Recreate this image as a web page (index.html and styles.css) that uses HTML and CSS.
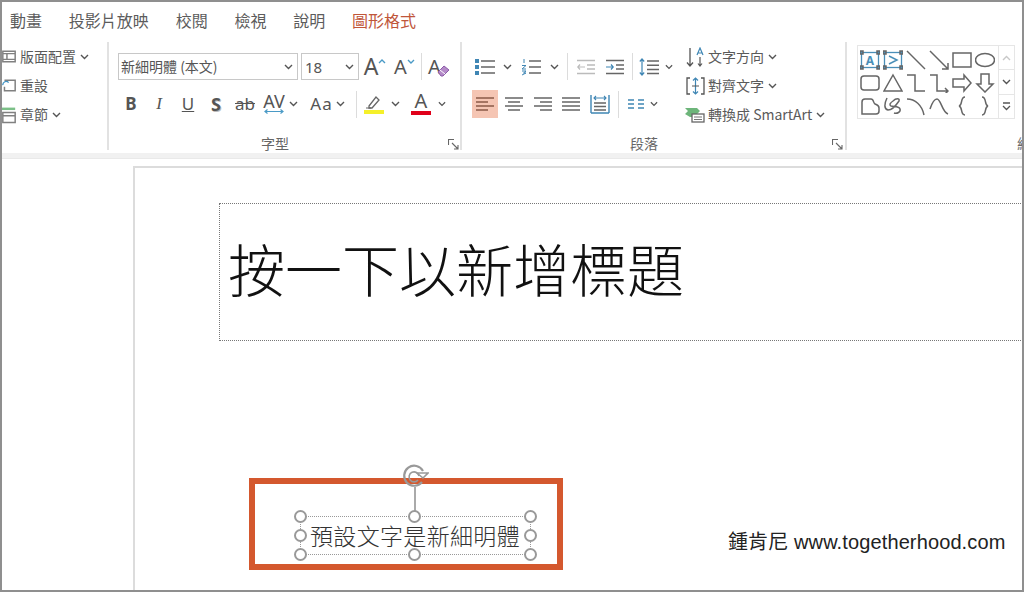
FILE: index.html
```html
<!DOCTYPE html>
<html lang="zh-Hant">
<head>
<meta charset="utf-8">
<title>PowerPoint</title>
<link rel="stylesheet" href="styles.css">
</head>
<body>
<svg class="defs" width="0" height="0">
  <symbol id="chev" viewBox="0 0 9 6"><path d="M1 1l3.500 3.500L8 1" fill="none" stroke="#555" stroke-width="1.400"/></symbol>
  <symbol id="launch" viewBox="0 0 11 11"><path d="M.5 6V.5H6M4 4l6 6M10 6v4H6" fill="none" stroke="#666" stroke-width="1.100"/></symbol>
</svg>
<div class="frame">
  <nav class="tabs">
    <span>動畫</span><span>投影片放映</span><span>校閱</span><span>檢視</span><span>說明</span><span class="tab-active">圖形格式</span>
  </nav>

  <div class="ribbon">
    <section class="group group-slides">
      <div class="cmd"><span class="cmd-icon"><svg width="17" height="15" viewBox="0 0 17 15"><path d="M1 1h15v13H1zM1 4h15M1 11h15M6 4v7" fill="none" stroke="#808080" stroke-width="1.800"/></svg></span>版面配置<svg class="chev" width="9" height="6"><use href="#chev"/></svg></div>
      <div class="cmd"><span class="cmd-icon"><svg width="17" height="15" viewBox="0 0 17 15"><path d="M3 1h13v13H3V9" fill="none" stroke="#808080" stroke-width="1.800"/><path d="M1 7a4 4 0 0 1 7-3" fill="none" stroke="#3f93c4" stroke-width="1.600"/></svg></span>重設</div>
      <div class="cmd"><span class="cmd-icon"><svg width="17" height="20" viewBox="0 0 17 20"><path d="M0 2.500h16" stroke="#7cc088" stroke-width="3"/><path d="M1 7h15v12H1zM1 11h15" fill="none" stroke="#808080" stroke-width="1.800"/></svg></span>章節<svg class="chev" width="9" height="6"><use href="#chev"/></svg></div>
    </section>

    <section class="group group-font">
      <div class="font-row-1">
        <div class="combo combo-font"><span class="combo-text">新細明體 (本文)</span><svg width="9" height="6"><use href="#chev"/></svg></div>
        <div class="combo combo-size">18<svg width="9" height="6"><use href="#chev"/></svg></div>
        <span class="cell big-a">A<svg width="8" height="5" viewBox="0 0 8 5"><path d="M1 4l3-3 3 3" fill="none" stroke="#4a9ac6" stroke-width="1.400"/></svg></span>
        <span class="cell mid-a">A<svg width="8" height="5" viewBox="0 0 8 5"><path d="M1 1l3 3 3-3" fill="none" stroke="#4a9ac6" stroke-width="1.400"/></svg></span>
        <span class="cell"><i class="sep"></i></span>
        <span class="cell mid-a clear-a">A<svg width="13" height="13" viewBox="0 0 13 13"><path d="M1 8l6-6 5 4-6 6H4z" fill="#b48ac8" stroke="#8b5aa8"/><path d="M3 6l5 4" stroke="#fff"/></svg></span>
      </div>
      <div class="font-row-2">
        <span class="cell fmt bold">B</span>
        <span class="cell fmt ital">I</span>
        <span class="cell fmt under">U</span>
        <span class="cell fmt shadow">S</span>
        <span class="cell fmt strike">ab</span>
        <span class="cell fmt spacing">AV<svg width="20" height="5" viewBox="0 0 20 5"><path d="M1 2.500h18M3.500 .5l-2.500 2 2.500 2M16.500 .5l2.500 2-2.500 2" fill="none" stroke="#4a9ac6" stroke-width="1.200"/></svg></span>
        <span class="cell"><svg width="9" height="6"><use href="#chev"/></svg></span>
        <i></i>
        <span class="cell fmt case">Aa</span>
        <span class="cell"><svg width="9" height="6"><use href="#chev"/></svg></span>
        <i></i>
        <span class="cell"><i class="sep"></i></span>
        <span class="cell color"><svg width="20" height="20" viewBox="0 0 20 20"><path d="M5 12l7-9 3 3-7 8H5z" fill="none" stroke="#666" stroke-width="1.300"/><path d="M2 14h5" stroke="#666"/><path d="M0 18h20" stroke="#f5f02a" stroke-width="4"/></svg></span>
        <span class="cell"><svg width="9" height="6"><use href="#chev"/></svg></span>
        <span class="cell color font-color">A</span>
        <span class="cell"><svg width="9" height="6"><use href="#chev"/></svg></span>
      </div>
      <div class="group-label">字型</div>
      <svg class="launcher" width="11" height="11"><use href="#launch"/></svg>
    </section>

    <section class="group group-para">
      <div class="para-left">
        <div class="para-row-1">
          <span class="cell"><svg width="20" height="18" viewBox="0 0 20 18"><path d="M6 3h14M6 9h14M6 15h14" stroke="#666" stroke-width="1.400"/><path d="M0 1h4v4H0zM0 7h4v4H0zM0 13h4v4H0z" fill="#3f86b4"/></svg></span>
          <span class="cell"><svg width="9" height="6"><use href="#chev"/></svg></span>
          <span class="cell"><svg width="19" height="18" viewBox="0 0 19 18"><path d="M7 3h12M7 9h12M7 15h12" stroke="#666" stroke-width="1.400"/><path d="M2 1v4M0 7.500h4L0 11h4M0 13h4L1.500 15H4L0 17" fill="none" stroke="#3f86b4"/></svg></span>
          <span class="cell"><svg width="9" height="6"><use href="#chev"/></svg></span>
          <span class="cell"><i class="sep"></i></span>
          <span class="cell"><svg width="18" height="16" viewBox="0 0 18 16"><path d="M0 1.500h18M10 6h8M10 10h8M0 14.500h18" stroke="#bbb" stroke-width="1.400"/><path d="M8 8H1M3 5.500L.8 8 3 10.500" fill="none" stroke="#bbb" stroke-width="1.200"/></svg></span>
          <span class="cell"><svg width="18" height="16" viewBox="0 0 18 16"><path d="M0 1.500h18M10 6h8M10 10h8M0 14.500h18" stroke="#666" stroke-width="1.400"/><path d="M0 8h7M5 5.500L7.200 8 5 10.500" fill="none" stroke="#3f86b4" stroke-width="1.200"/></svg></span>
          <span class="cell"><i class="sep"></i></span>
          <span class="cell"><svg width="20" height="18" viewBox="0 0 20 18"><path d="M8 3h12M8 7.300h12M8 11.500h12M8 15.500h12" stroke="#666" stroke-width="1.400"/><path d="M3 1v16M.8 3.500L3 1l2.200 2.500M.8 14.500L3 17l2.200-2.500" fill="none" stroke="#3f86b4" stroke-width="1.200"/></svg></span>
          <span class="cell"><svg width="9" height="6"><use href="#chev"/></svg></span>
        </div>
        <div class="para-row-2">
          <span class="cell align-on"><svg width="18" height="14" viewBox="0 0 18 14"><path d="M0 1h18M0 5h12M0 9h18M0 13h12" stroke="#8a5a48" stroke-width="1.400"/></svg></span>
          <span class="cell"><svg width="18" height="14" viewBox="0 0 18 14"><path d="M0 1h18M3 5h12M0 9h18M3 13h12" stroke="#666" stroke-width="1.400"/></svg></span>
          <span class="cell"><svg width="18" height="14" viewBox="0 0 18 14"><path d="M0 1h18M6 5h12M0 9h18M6 13h12" stroke="#666" stroke-width="1.400"/></svg></span>
          <span class="cell"><svg width="18" height="14" viewBox="0 0 18 14"><path d="M0 1h18M0 5h18M0 9h18M0 13h18" stroke="#666" stroke-width="1.400"/></svg></span>
          <span class="cell"><svg width="20" height="20" viewBox="0 0 20 20"><path d="M1 1v18M19 1v18M1 19h18" fill="none" stroke="#3f86b4" stroke-width="1.400"/><path d="M4 9h12M4 12.500h12M4 16h12" stroke="#666" stroke-width="1.400"/><path d="M4 4h12M6 2L4 4l2 2M14 2l2 2-2 2" fill="none" stroke="#3f86b4" stroke-width="1.100"/></svg></span>
          <span class="cell"><i class="sep"></i></span>
          <span class="cell"><svg width="16" height="10" viewBox="0 0 16 10"><path d="M0 1h6M0 5h6M0 9h6M10 1h6M10 5h6M10 9h6" stroke="#3f86b4" stroke-width="1.400"/></svg></span>
          <span class="cell"><svg width="9" height="6"><use href="#chev"/></svg></span>
        </div>
      </div>
      <div class="para-right">
        <div class="cmd"><span class="text-icon"><svg width="19" height="20" viewBox="0 0 19 20"><path d="M4 1v18M1 15.500L4 19l3-3.500" fill="none" stroke="#555" stroke-width="1.300"/><path d="M11 8l3-7 3 7M12 6h4" fill="none" stroke="#3f86b4" stroke-width="1.200"/><path d="M14 10v9M12 16.500l2 2.500 2-2.500" fill="none" stroke="#555" stroke-width="1.200"/></svg></span>文字方向<svg class="chev" width="9" height="6"><use href="#chev"/></svg></div>
        <div class="cmd"><span class="text-icon"><svg width="19" height="18" viewBox="0 0 19 18"><path d="M4 1H1v16h3M15 1h3v16h-3" fill="none" stroke="#555" stroke-width="1.300"/><path d="M9.500 1v16M7 3.500L9.500 1 12 3.500M7 14.500L9.500 17l2.500-2.500" fill="none" stroke="#3f86b4" stroke-width="1.200"/><path d="M6 9h7" stroke="#555"/></svg></span>對齊文字<svg class="chev" width="9" height="6"><use href="#chev"/></svg></div>
        <div class="cmd"><span class="text-icon"><svg width="20" height="16" viewBox="0 0 20 16"><path d="M0 1h12l3 3-3 3H7v3H5L0 7l3-3z" fill="#6db57a"/><rect x="7" y="7" width="12" height="8" fill="#fff" stroke="#666" stroke-width="1.300"/><path d="M9 10h8M9 12.500h8" stroke="#777"/></svg></span>轉換成 SmartArt<svg class="chev" width="9" height="6"><use href="#chev"/></svg></div>
      </div>
      <div class="group-label">段落</div>
      <svg class="launcher" width="11" height="11"><use href="#launch"/></svg>
    </section>

    <section class="group group-shapes">
      <div class="gallery">
        <div class="shapes">
          <svg width="20" height="20" viewBox="0 0 20 20"><rect x="1.500" y="2.500" width="17" height="15" fill="none" stroke="#4a8fb8" stroke-width="1.300"/><path d="M0 1h3v3H0zM17 1h3v3h-3zM0 16h3v3H0zM17 16h3v3h-3z" fill="#4a8fb8"/><text x="10" y="15" class="shape-a">A</text></svg>
          <svg width="20" height="20" viewBox="0 0 20 20"><rect x="1.500" y="2.500" width="17" height="15" fill="none" stroke="#4a8fb8" stroke-width="1.300"/><path d="M0 1h3v3H0zM17 1h3v3h-3zM0 16h3v3H0zM17 16h3v3h-3z" fill="#4a8fb8"/><path d="M6 6l8 4-8 4" fill="none" stroke="#4a8fb8" stroke-width="1.500"/></svg>
          <svg width="20" height="20" viewBox="0 0 20 20"><path d="M1 1l18 18"/></svg>
          <svg width="20" height="20" viewBox="0 0 20 20"><path d="M1 1l18 18M13 19h6v-6"/></svg>
          <svg width="20" height="20" viewBox="0 0 20 20"><rect x="1" y="3" width="18" height="14"/></svg>
          <svg width="20" height="20" viewBox="0 0 20 20"><ellipse cx="10" cy="10" rx="9.500" ry="6.500"/></svg>
          <svg width="20" height="20" viewBox="0 0 20 20"><rect x="1" y="3" width="18" height="14" rx="3"/></svg>
          <svg width="20" height="20" viewBox="0 0 20 20"><path d="M10 2l9 16H1z"/></svg>
          <svg width="20" height="20" viewBox="0 0 20 20"><path d="M1 2h8v16h10"/></svg>
          <svg width="20" height="20" viewBox="0 0 20 20"><path d="M1 2h7v16h11M16 15l3 3-3 3"/></svg>
          <svg width="20" height="20" viewBox="0 0 20 20"><path d="M1 6h11V2l7 8-7 8v-4H1z"/></svg>
          <svg width="20" height="20" viewBox="0 0 20 20"><path d="M6 1h8v10h4l-8 8-8-8h4z"/></svg>
          <svg width="20" height="20" viewBox="0 0 20 20"><path d="M2 18V6c0-2 1-3 3-3h6c3 0 2 4 4 5s4 1 4 4v3c0 2-1 3-3 3z"/></svg>
          <svg width="20" height="20" viewBox="0 0 20 20"><path d="M4 2c-3 6-3 11 1 12 4 0 9-6 11-9 1-3-3-3-6 0-3 2-4 4-2 5 3 1 8 0 9 3 1 3-3 5-6 4"/></svg>
          <svg width="20" height="20" viewBox="0 0 20 20"><path d="M1 3c8 0 15 6 17 16"/></svg>
          <svg width="20" height="20" viewBox="0 0 20 20"><path d="M1 13c2-6 5-10 7-10 4 0 5 13 11 15"/></svg>
          <svg width="20" height="20" viewBox="0 0 20 20"><path d="M13 1c-5 0-2 8-6 9 4 1 1 9 6 9"/></svg>
          <svg width="20" height="20" viewBox="0 0 20 20"><path d="M7 1c5 0 2 8 6 9-4 1-1 9-6 9"/></svg>
        </div>
        <div class="scroller">
          <span class="scroll-btn"><svg width="9" height="6" viewBox="0 0 9 6"><path d="M1 5l3.500-3.500L8 5" fill="none" stroke="#c8c8c8" stroke-width="1.400"/></svg></span>
          <span class="scroll-btn"><svg width="9" height="6"><use href="#chev"/></svg></span>
          <span class="scroll-btn"><svg width="9" height="9" viewBox="0 0 9 9"><path d="M1 1h7M1 4l3.500 3.500L8 4" fill="none" stroke="#555" stroke-width="1.300"/></svg></span>
        </div>
      </div>
      <div class="group-label">繪圖</div>
    </section>
  </div>

  <main class="workspace">
    <div class="slide">
      <div class="title-box">按一下以新增標題</div>
      <div class="highlight"></div>
      <div class="textbox">
        <span class="stem"></span>
        <svg class="rotate" width="28" height="28" viewBox="0 0 28 28"><path d="M21 20a10 10 0 1 1 1-11" fill="none" stroke="#999" stroke-width="2.200"/><path d="M18 14a5 5 0 1 0-1 4" fill="none" stroke="#999" stroke-width="1.600"/><path d="M16 11h11l-5 5z" fill="#fff" stroke="#999" stroke-width="1.600"/></svg>
        預設文字是新細明體
        <i class="handle h-tl"></i><i class="handle h-tc"></i><i class="handle h-tr"></i>
        <i class="handle h-ml"></i><i class="handle h-mr"></i>
        <i class="handle h-bl"></i><i class="handle h-bc"></i><i class="handle h-br"></i>
      </div>
      <div class="credit">鍾肯尼 www.togetherhood.com</div>
    </div>
  </main>
</div>
</body>
</html>
```

FILE: styles.css
```css
* { box-sizing: border-box; }
html, body { margin: 0; padding: 0; background: #fff; }
body { font-family: "Noto Sans CJK TC", "Liberation Sans", sans-serif; color: #555; }
.defs { position: absolute; }
.frame {
  width: 1024px; height: 592px;
  border: 2px solid #8f8f8f;
  overflow: hidden;
  display: flex; flex-direction: column;
  background: #fff;
}

/* tabs */
.tabs {
  height: 33px; flex: none;
  display: flex; align-items: center; gap: 26.800px;
  padding-left: 8px; padding-top: 2px;
  font-size: 16px; line-height: 20px; color: #5c5c5c;
}
.tab-active { color: #c0563a; }

/* ribbon */
.ribbon {
  height: 124px; flex: none;
  display: flex;
  padding: 7px 0 10px;
  border-bottom: 1px solid #e9e9e9;
  box-shadow: inset 0 -5px 0 #f1f1f1;
}
.group {
  position: relative;
  height: 108px; flex: none;
  border-right: 2px solid #e2e2e2;
  display: flex; flex-direction: column;
  font-size: 14px;
}
.group-slides { width: 107px; }
.group-font { width: 353px; padding: 11px 0 0 9px; }
.group-para { width: 385px; }
.group-shapes { width: 175px; border-right: 0; padding: 3px 0 0 10px; }

.group-label {
  position: absolute; left: 0; bottom: 0;
  height: 14px; line-height: 14px;
  text-align: center; font-size: 14px; color: #666;
  white-space: nowrap;
}
.group-font .group-label { left: 152px; }
.group-para .group-label { left: 168px; }
.group-shapes .group-label { left: 169px; width: 30px; overflow: hidden; }
.launcher { position: absolute; right: 2px; bottom: 0; }
.group-font .launcher { right: 1px; }

.cmd {
  height: 29px; display: flex; align-items: center;
  white-space: nowrap; line-height: 29px; color: #5a5a5a;
}
.cmd-icon { width: 14px; margin-right: 4px; display: flex; justify-content: flex-end; flex: none; }
.chev { margin-left: 4px; }

.cell {
  display: flex; align-items: center; justify-content: center;
  min-width: 0; height: 100%;
  color: #555;
}
.sep { display: block; width: 1px; height: 27px; background: #dcdcdc; }

/* font group */
.font-row-1 {
  height: 27px;
  display: grid;
  grid-template-columns: 180px 61px 32px 27px 6px 30px;
}
.combo {
  height: 27px; border: 1px solid #c8c8c8; background: #fff;
  display: flex; align-items: center; justify-content: space-between;
  padding: 0 4px 0 2px; color: #555; white-space: nowrap;
}
.combo-text { margin-top: -2px; }
.combo-size { margin-left: 3px; font-size: 15px; padding-left: 3px; font-family: "Noto Sans", sans-serif; }
.big-a { font: 400 23px/27px "Noto Sans", sans-serif; }
.big-a svg { margin: -10px 0 0 0; }
.mid-a { font: 400 20px/27px "Noto Sans", sans-serif; }
.mid-a svg { margin: -10px 0 0 0; }
.clear-a svg { margin: 7px 0 0 -4px; }

.font-row-2 {
  height: 28px; margin-top: 10px;
  display: grid;
  grid-template-columns: 26px 30px 28px 28px 30px 28px 10px 11px 25px 12px 4px 12px 24px 18px 34px 8px;
}
.fmt { font: 400 17px/28px "Noto Sans", sans-serif; color: #555; }
.bold { font-weight: 700; }
.ital { font-family: "Liberation Serif", serif; font-style: italic; }
.under { text-decoration: underline; }
.shadow { font-weight: 700; font-size: 18px; text-shadow: 1px 1px 0 #bbb; }
.strike { text-decoration: line-through; }
.spacing { flex-direction: column; line-height: 15px; font-size: 18px; }
.case { font-size: 17px; letter-spacing: 1px; }
.color { height: 28px; }
.font-color {
  font: 400 20px/20px "Noto Sans", sans-serif; color: #555;
  flex-direction: column; justify-content: flex-start; padding-top: 1px;
}
.font-color::after { content: ""; display: block; width: 20px; height: 4px; background: #e0001a; }

/* paragraph group */
.group-para { flex-direction: row; }
.para-left { width: 223px; flex: none; padding: 11px 0 0 10px; }
.para-row-1 {
  height: 27px;
  display: grid;
  grid-template-columns: 26px 18px 31px 14px 12px 26px 32px 2px 32px 8px;
}
.para-row-2 {
  height: 28px; margin-top: 10px;
  display: grid;
  grid-template-columns: 26px 32px 26px 30px 28px 8px 28px 8px;
}
.align-on { background: #f5c5b3; }
.text-icon { width: 20px; margin-right: 3px; display: flex; justify-content: center; flex: none; }

/* shapes */
.gallery {
  width: 158px; height: 74px;
  display: flex;
  border: 1px solid #e6e6e6;
}
.shapes {
  width: 141px;
  display: grid;
  grid-template-columns: repeat(6, 23px);
  grid-auto-rows: 23px;
  align-content: center;
  align-items: center;
  padding-left: 2px; padding-top: 2px;
  border-right: 1px solid #e6e6e6;
}
.shapes svg { fill: none; stroke: #666; stroke-width: 1.500; display: block; }
.shapes .shape-a { font: 700 12px "Noto Sans", sans-serif; fill: #4a8fb8; stroke: none; text-anchor: middle; }
.scroller { flex: 1; display: flex; flex-direction: column; }
.scroll-btn {
  flex: 1; display: flex; align-items: center; justify-content: center;
  border-bottom: 1px solid #e6e6e6;
}
.scroll-btn:last-child { border-bottom: 0; }

/* slide canvas */
.workspace { flex: 1; position: relative; min-height: 0; padding: 7px 0 0 131px; }
.slide {
  position: relative;
  width: 900px; height: 440px;
  border-left: 2px solid #dcdcdc;
  border-top: 2px solid #dcdcdc;
  background: #fff;
}
.title-box {
  position: absolute; left: 84px; top: 35px;
  width: 820px; height: 138px;
  border: 1px dotted #777;
  padding-left: 8px;
  font-size: 57px; line-height: 126px; font-weight: 300; color: #111;
  white-space: nowrap;
}
.highlight {
  position: absolute; left: 114px; top: 310px;
  width: 314px; height: 92px;
  border: 6px solid #d4582e;
}
.textbox {
  position: absolute; left: 165px; top: 348px;
  width: 231px; height: 39px;
  border: 1px dotted #999;
  padding-left: 9px;
  font-size: 23px; letter-spacing: .33px; line-height: 36px; font-weight: 300; color: #333;
  white-space: nowrap;
}
.stem { position: absolute; left: 113px; top: -30px; width: 2px; height: 30px; background: #aaa; }
.rotate { position: absolute; left: 100px; top: -55px; }
.handle {
  position: absolute; width: 13px; height: 13px;
  border: 2px solid #999; border-radius: 50%; background: #fff;
}
.h-tl { left: -7px; top: -7px; }
.h-tc { left: 107px; top: -7px; }
.h-tr { right: -7px; top: -7px; }
.h-ml { left: -7px; top: 12px; }
.h-mr { right: -7px; top: 12px; }
.h-bl { left: -7px; bottom: -7px; }
.h-bc { left: 107px; bottom: -7px; }
.h-br { right: -7px; bottom: -7px; }
.credit {
  position: absolute; left: 593px; top: 361px;
  font: 400 20px/26px "Liberation Sans", "Noto Sans CJK TC", sans-serif; color: #222;
  letter-spacing: .12px;
  white-space: nowrap;
}
```
